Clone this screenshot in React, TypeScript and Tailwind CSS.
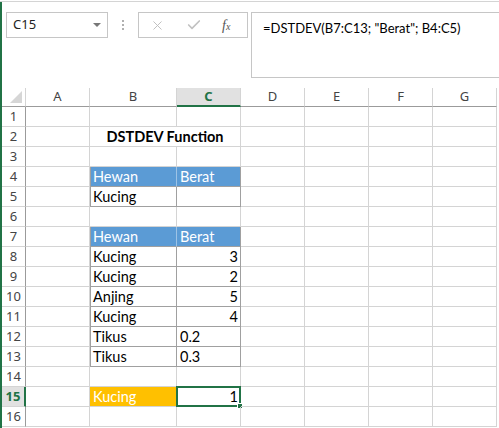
import { X, Check } from "lucide-react";

type Cell = {
  text?: string;
  right?: boolean;
  bold?: boolean;
  fill?: "blue" | "orange";
  boxed?: boolean;
  span?: boolean;
};

const cols = ["A", "B", "C", "D", "E", "F", "G"];

const data: Record<number, Record<string, Cell>> = {
  2: { B: { text: "DSTDEV Function", bold: true, span: true } },
  4: { B: { text: "Hewan", fill: "blue", boxed: true }, C: { text: "Berat", fill: "blue", boxed: true } },
  5: { B: { text: "Kucing", boxed: true }, C: { boxed: true } },
  7: { B: { text: "Hewan", fill: "blue", boxed: true }, C: { text: "Berat", fill: "blue", boxed: true } },
  8: { B: { text: "Kucing", boxed: true }, C: { text: "3", right: true, boxed: true } },
  9: { B: { text: "Kucing", boxed: true }, C: { text: "2", right: true, boxed: true } },
  10: { B: { text: "Anjing", boxed: true }, C: { text: "5", right: true, boxed: true } },
  11: { B: { text: "Kucing", boxed: true }, C: { text: "4", right: true, boxed: true } },
  12: { B: { text: "Tikus", boxed: true }, C: { text: "0.2", boxed: true } },
  13: { B: { text: "Tikus", boxed: true }, C: { text: "0.3", boxed: true } },
  15: { B: { text: "Kucing", fill: "orange" }, C: { text: "1", right: true } },
};

const rows = Array.from({ length: 16 }, (_, i) => i + 1);

const headFont = "font-['Noto_Sans','Open_Sans',sans-serif]";
const cellFont = "font-['Lato','Liberation_Sans',sans-serif]";

function GridCell({ row, col }: { row: number; col: string }) {
  const c = data[row]?.[col] ?? {};
  const isSel = row === 15 && col === "C";
  let cls = `relative h-[20px] border-r border-b border-[#d4d4d4] flex items-end pb-[1px] text-[14.5px] leading-[17px] text-black whitespace-nowrap ${cellFont}`;
  if (c.span) cls += " col-span-2 justify-center font-bold";
  if (c.right) cls += " justify-end pr-[2px]";
  else if (!c.span) cls += " pl-[3px]";
  if (c.fill === "blue") cls += " bg-[#5b9bd5] text-white";
  if (c.fill === "orange") cls += " bg-[#ffc000] text-white";
  if (c.boxed) {
    if (col === "C") cls += " border-r-[#a0a0a0]";
    else if (c.fill === "blue") cls += " border-r-[#9dc3e6]";
    else cls += " border-r-[#a0a0a0]";
    cls += " border-b-[#a0a0a0]";
  }
  if (c.boxed && col === "B") cls += " shadow-[inset_1px_0_0_#a0a0a0]";
  return (
    <div className={cls}>
      {c.text}
      {isSel && (
        <div className="absolute -left-[1px] -top-[1px] -right-[1px] -bottom-[1px] border-2 border-[#217346]">
          <div className="absolute -right-[4px] -bottom-[4px] w-[6px] h-[6px] bg-[#217346] border border-white" />
        </div>
      )}
    </div>
  );
}

function Row({ r }: { r: number }) {
  const sel = r === 15;
  const cells = cols.filter((c) => !(r === 2 && c === "C"));
  return (
    <>
      <div
        className={`h-[20px] border-b border-[#d4d4d4] flex items-center justify-center text-[13px] ${headFont} ${
          sel
            ? "bg-[#e1e1e1] border-r-2 border-r-[#217346] text-[#217346] font-bold"
            : "border-r border-r-[#9b9b9b] text-[#444]"
        }`}
      >
        {r}
      </div>
      {cells.map((c) => (
        <GridCell key={c} row={r} col={c} />
      ))}
    </>
  );
}

export default function App() {
  return (
    <div className="w-[499px] h-[428px] bg-white overflow-hidden">
      <div className="h-[2px] border-b border-[#d4d4d4]" />
      <div className="border-l-2 border-[#217346] h-[426px]">
        {/* formula bar */}
        <div className="flex items-start pt-[10px] h-[86px]">
          <div className={`ml-[4px] w-[102px] h-[26px] border border-[#c6c6c6] flex items-center justify-between pl-[6px] pr-[6px] text-[13px] text-[#222] ${headFont}`}>
            <span>C15</span>
            <div className="w-0 h-0 border-l-[4px] border-r-[4px] border-t-[4px] border-l-transparent border-r-transparent border-t-[#777]" />
          </div>
          <div className="w-[30px] h-[26px] flex flex-col items-center justify-center gap-[2px]">
            <div className="w-[2px] h-[2px] bg-[#b0b0b0]" />
            <div className="w-[2px] h-[2px] bg-[#b0b0b0]" />
            <div className="w-[2px] h-[2px] bg-[#b0b0b0]" />
          </div>
          <div className="w-[110px] h-[26px] border border-[#c6c6c6] flex items-center">
            <X size={15} strokeWidth={1.5} color="#bdbdbd" className="ml-[11px]" />
            <Check size={16} strokeWidth={2.5} color="#c2c2c2" className="ml-[21px]" />
            <span className="ml-[20px] text-[14px] italic text-[#555] font-['Liberation_Serif',serif]">
              f<span className="text-[10px]">x</span>
            </span>
          </div>
          <div className={`ml-[3px] flex-1 h-[66px] border border-r-0 border-[#c6c6c6] pl-[11px] pt-[6px] text-[13px] text-black ${cellFont}`}>
            =DSTDEV(B7:C13; "Berat"; B4:C5)
          </div>
        </div>

        {/* sheet grid */}
        <div className="grid grid-cols-[24px_64px_87px_64px_64px_64px_64px_64px]">
          <div className="h-[19px] border-r border-b border-r-[#d4d4d4] border-b-[#9b9b9b] flex items-end justify-end pr-[3px] pb-[3px]">
            <svg width="12" height="12" viewBox="0 0 12 12">
              <polygon points="12,0 12,12 0,12" fill="#d6d6d6" />
            </svg>
          </div>
          {cols.map((c) => (
            <div
              key={c}
              className={`h-[19px] border-r border-[#d4d4d4] flex items-center justify-center text-[13px] ${headFont} ${
                c === "C"
                  ? "bg-[#e1e1e1] border-b-2 border-b-[#217346] text-[#217346] font-bold"
                  : "border-b border-b-[#9b9b9b] text-[#444]"
              }`}
            >
              {c}
            </div>
          ))}
          {rows.map((r) => (
            <Row key={r} r={r} />
          ))}
        </div>
      </div>
    </div>
  );
}
